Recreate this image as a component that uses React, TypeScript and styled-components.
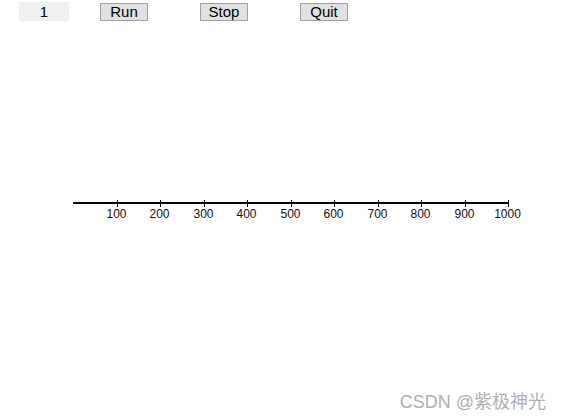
import styled, { createGlobalStyle } from "styled-components";

const GlobalStyle = createGlobalStyle`
  html, body {
    margin: 0;
    padding: 0;
    background: #fff;
  }
  body {
    font-family: "Liberation Sans", Arial, sans-serif;
  }
`;

const Page = styled.div`
  position: relative;
  width: 561px;
  height: 420px;
  overflow: hidden;
  background: #fff;
`;

const Toolbar = styled.div`
  display: flex;
  align-items: center;
  padding: 2px 0 0 19px;
  height: 19px;
`;

const Counter = styled.div`
  width: 50px;
  height: 19px;
  background: #f0f0f0;
  display: flex;
  align-items: center;
  justify-content: center;
  font-size: 15px;
  color: #000;
  margin-right: 31px;
`;

const Button = styled.button`
  box-sizing: border-box;
  width: 48px;
  height: 18px;
  padding: 0;
  margin: 0 52px 0 0;
  border: 1px solid #a0a0a0;
  background: #e1e1e1;
  font-family: "Liberation Sans", Arial, sans-serif;
  font-size: 15px;
  line-height: 16px;
  color: #000;
`;

const Chart = styled.svg`
  display: block;
  margin-top: 175px;
`;

const Watermark = styled.div`
  position: absolute;
  right: 15px;
  bottom: 7px;
  font-family: "Liberation Sans", "Noto Sans CJK SC", sans-serif;
  font-size: 18px;
  color: #b0b0b0;
`;

const ticks = [100, 200, 300, 400, 500, 600, 700, 800, 900, 1000];
const x0 = 73;
const scale = 0.435;

export default function App() {
  return (
    <Page>
      <GlobalStyle />
      <Toolbar>
        <Counter>1</Counter>
        <Button>Run</Button>
        <Button>Stop</Button>
        <Button>Quit</Button>
      </Toolbar>
      <Chart width={561} height={40} viewBox="0 0 561 40">
        <line x1={x0} y1={7} x2={509} y2={7} stroke="#000" strokeWidth={2} />
        {ticks.map((t) => {
          const x = Math.round(x0 + t * scale) + 0.5;
          return (
            <g key={t}>
              <line x1={x} y1={4} x2={x} y2={11} stroke="#000" strokeWidth={1} />
              <text
                x={x - 1}
                y={22}
                textAnchor="middle"
                fontFamily="'Liberation Sans', Arial, sans-serif"
                fontSize={12}
                fill="#111"
              >
                {t}
              </text>
            </g>
          );
        })}
      </Chart>
      <Watermark>CSDN @紫极神光</Watermark>
    </Page>
  );
}
